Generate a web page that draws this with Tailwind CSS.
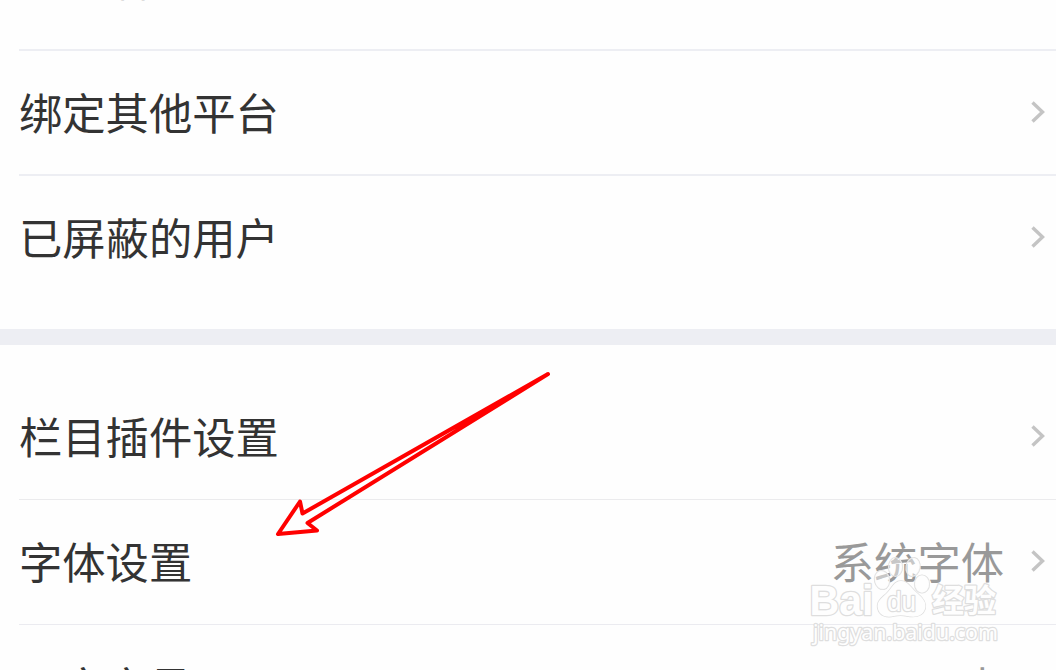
<!DOCTYPE html>
<html lang="zh-CN">
<head>
    <meta charset="UTF-8">
    <meta name="viewport" content="width=device-width, initial-scale=1.0">
    <title>设置</title>
    <script src="https://cdn.jsdelivr.net/npm/@tailwindcss/browser@4"></script>
</head>
<body class="bg-[#fefefe]">
    <div class="relative h-[670px] w-[1056px] overflow-hidden bg-[#fefefe] font-['Noto_Sans_CJK_SC',sans-serif] text-[43.3px] leading-none text-[#333333]">
        <!-- Account settings -->
        <section class="flex h-[329px] flex-col pl-[19px]">
            <div class="flex h-[51px] shrink-0 items-end border-b-2 border-[#edeef3] pl-[97px]">
                <span class="mb-[48px] text-[34px] text-[#dddddd]">目</span>
            </div>
            <div class="flex h-[125px] shrink-0 items-center justify-between border-b-2 border-[#edeef3] pr-[11px] pb-[2px]">
                <span>绑定其他平台</span>
                <svg class="h-[22px] w-[14px]" viewBox="0 0 14 22" fill="none" stroke="#c4c4c4" stroke-width="3.4"><path d="M1.5 1.5L11.5 11L1.5 20.5"/></svg>
            </div>
            <div class="flex h-[123px] shrink-0 items-center justify-between pr-[11px] pb-[2px]">
                <span>已屏蔽的用户</span>
                <svg class="h-[22px] w-[14px]" viewBox="0 0 14 22" fill="none" stroke="#c4c4c4" stroke-width="3.4"><path d="M1.5 1.5L11.5 11L1.5 20.5"/></svg>
            </div>
        </section>

        <div class="h-4 bg-[#edeef3]"></div>

        <!-- Reading settings -->
        <section class="flex flex-col pt-[30px] pl-[19px]">
            <div class="flex h-[125px] shrink-0 items-center justify-between border-b border-[#ebebed] pr-[11px] pb-[2px]">
                <span>栏目插件设置</span>
                <svg class="h-[22px] w-[14px]" viewBox="0 0 14 22" fill="none" stroke="#c4c4c4" stroke-width="3.4"><path d="M1.5 1.5L11.5 11L1.5 20.5"/></svg>
            </div>
            <div class="flex h-[125px] shrink-0 items-center border-b border-[#ebebf0] pr-[11px] pb-[2px]">
                <span>字体设置</span>
                <span class="mr-[27px] ml-auto text-[#999999]">系统字体</span>
                <svg class="h-[22px] w-[14px]" viewBox="0 0 14 22" fill="none" stroke="#c4c4c4" stroke-width="3.4"><path d="M1.5 1.5L11.5 11L1.5 20.5"/></svg>
            </div>
            <div class="flex h-[125px] shrink-0 items-center pr-[11px] pb-[3px]">
                <span>正文字号</span>
                <span class="mr-[27px] ml-auto text-[#999999]">中</span>
                <svg class="h-[22px] w-[14px]" viewBox="0 0 14 22" fill="none" stroke="#c4c4c4" stroke-width="3.4"><path d="M1.5 1.5L11.5 11L1.5 20.5"/></svg>
            </div>
        </section>

        <!-- Arrow pointing at the font row -->
        <svg class="absolute top-[360px] left-[260px] h-[190px] w-[300px]" viewBox="0 0 300 190" fill="none" stroke="#ff0000" stroke-width="4" stroke-linecap="round" stroke-linejoin="round">
            <path d="M288 14L42.5 153.5L40 141.5L18 174L57 170.5L47.5 163Z"/>
        </svg>

        <!-- Watermark -->
        <svg class="absolute top-[550px] left-[800px] h-[110px] w-[210px]" viewBox="0 0 210 110" fill="#fefefe" stroke="#dedede" stroke-width="2.6" stroke-linejoin="round" paint-order="stroke">
            <text x="9.500" y="65" font-family="Liberation Sans" font-weight="bold" font-size="42" textLength="64" lengthAdjust="spacingAndGlyphs">Bai</text>
            <g fill-opacity="0.45" stroke-width="1.2">
                <ellipse cx="82" cy="30" rx="7.5" ry="9.5" transform="rotate(-12 82 30)"/>
                <ellipse cx="95.500" cy="17" rx="7" ry="9.5"/>
                <ellipse cx="113" cy="17" rx="7" ry="9.5" transform="rotate(10 113 17)"/>
                <ellipse cx="122" cy="34" rx="7.5" ry="9"/>
            </g>
            <path stroke-width="1.6" d="M101 31C108 31 111 38 117 43C123 48 127 53 125 59C122 68 113 67 107 66C103 65 98 65 94 66C87 68 80 66 78 59C76 51 82 48 87 43C92 38 94 31 101 31Z"/>
            <text x="87" y="61" font-family="Liberation Sans" font-size="27" textLength="29" lengthAdjust="spacingAndGlyphs">du</text>
            <text x="132" y="62" font-family="Noto Sans CJK SC" font-weight="bold" font-size="32" textLength="64" lengthAdjust="spacingAndGlyphs">经验</text>
            <text x="13" y="90" font-family="Noto Sans" font-size="22" textLength="185" lengthAdjust="spacingAndGlyphs">jingyan.baidu.com</text>
        </svg>
    </div>
</body>
</html>
